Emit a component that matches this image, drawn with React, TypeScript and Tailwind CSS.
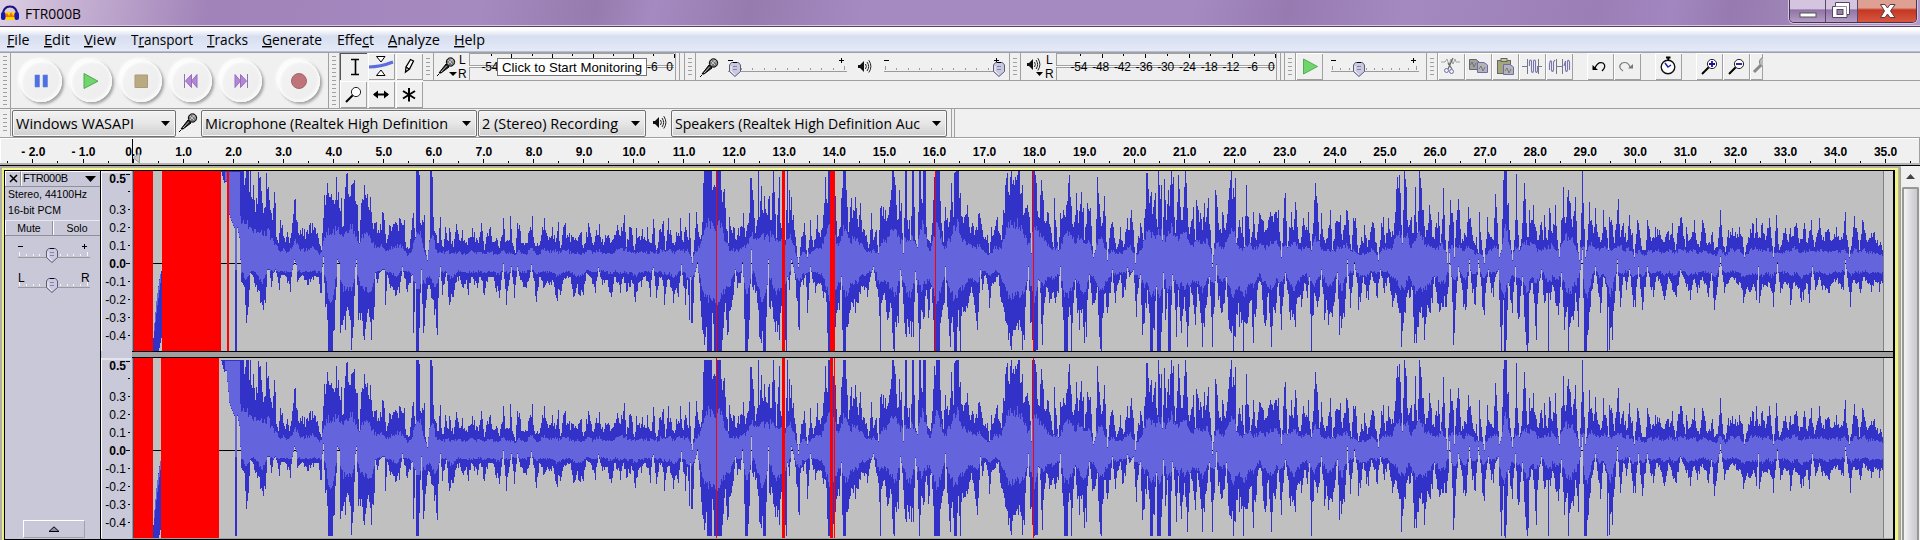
import React from "react";

const TOP =
  "133:33 221:33 243:33 244:75 246:33 248:33 249:95 250:33 251:110 253:75 255:155 258:36 260:50 262:130 264:145 266:38 268:80 270:150 272:180 274:95 275:130 276:230 278:250 280:180 282:195 284:235 287:215 289:250 292:190 294:120 295:118 297:185 298:220 302:205 306:215 312:190 315:205 318:235 321:270 322:220 324:105 327:70 330:110 333:120 336:52 338:95 341:115 342:200 345:80 347:38 349:110 351:75 354:60 357:135 359:250 361:130 364:75 366:115 370:110 372:190 376:185 379:220 382:155 384:180 386:250 389:195 392:200 396:190 399:175 402:195 404:180 405:245 409:265 411:210 413:160 415:230 416:33 418:33 419:45 420:190 422:180 424:165 425:270 427:300 429:240 430:33 431:33 432:50 433:170 435:220 438:250 440:172 441:240 443:260 445:200 447:240 449:205 453:260 456:192 459:240 462:210 465:250 469:235 472:205 476:235 478:250 481:188 484:270 487:220 490:200 492:245 496:235 499:265 503:175 505:245 509:240 510:168 512:250 515:280 517:190 519:195 522:250 526:250 528:220 532:168 534:250 537:250 541:225 542:200 544:175 545:210 548:240 552:200 555:245 558:186 560:265 563:200 565:190 567:225 571:225 574:240 578:230 581:215 583:265 586:215 588:190 591:230 594:245 596:210 599:192 601:245 605:225 608:225 610:250 614:225 617:195 619:225 621:200 624:165 626:260 629:200 631:205 634:270 636:205 640:240 642:207 645:240 647:200 649:245 651:250 653:178 656:270 659:210 663:183 665:270 668:175 670:210 673:250 676:215 678:220 680:175 682:240 685:200 688:240 689:160 691:290 692:310 694:240 696:157 699:230 702:185 703:70 704:33 711:33 713:80 715:80 716:33 720:33 721:90 722:125 724:88 725:145 728:250 729:170 731:210 734:205 736:240 738:205 740:200 743:160 745:230 748:190 750:55 751:55 753:120 755:220 757:180 758:33 759:170 761:78 762:150 764:107 766:160 769:107 771:180 773:33 774:95 776:235 779:50 780:190 782:190 784:190 785:240 787:33 788:190 789:90 790:150 791:110 793:165 795:230 798:320 800:260 801:230 804:190 807:290 810:180 813:260 817:165 820:230 822:205 824:130 825:50 827:130 828:33 830:33 835:108 837:230 840:200 841:115 843:33 845:33 846:90 848:215 851:115 853:150 855:110 858:200 860:130 861:180 864:210 866:225 868:265 870:210 871:160 873:240 876:210 878:280 880:145 883:140 885:150 888:165 890:120 892:33 893:33 895:75 897:180 899:90 901:130 903:280 905:33 906:33 907:180 909:180 910:240 912:33 913:33 915:240 917:260 919:33 920:33 922:130 923:33 925:33 926:200 928:240 930:250 932:190 934:50 936:33 939:33 941:190 943:245 945:140 948:200 950:150 951:70 953:170 954:40 956:33 958:33 960:100 963:190 967:135 969:200 972:190 975:210 979:160 982:210 985:230 987:225 989:280 991:200 994:210 997:170 999:220 1001:240 1003:150 1005:75 1007:40 1009:105 1010:50 1011:33 1013:60 1015:50 1017:45 1018:33 1019:33 1021:100 1022:75 1024:160 1027:135 1029:170 1031:280 1032:33 1034:33 1036:70 1038:170 1041:60 1043:120 1045:190 1047:155 1050:200 1053:260 1054:115 1056:200 1058:270 1060:160 1063:150 1066:135 1068:70 1069:45 1070:110 1073:200 1076:100 1078:190 1081:97 1083:145 1084:240 1087:130 1090:145 1093:290 1095:270 1097:50 1098:100 1100:170 1102:190 1104:108 1107:300 1110:205 1112:185 1115:250 1117:260 1120:200 1123:260 1127:175 1129:210 1131:150 1133:210 1135:310 1137:250 1140:190 1143:240 1146:40 1147:40 1149:130 1151:95 1153:140 1155:100 1157:200 1158:33 1159:75 1161:75 1162:240 1164:58 1166:180 1168:90 1170:75 1171:33 1173:50 1175:220 1178:45 1180:140 1182:180 1184:80 1185:33 1186:70 1188:200 1190:200 1193:140 1195:240 1196:120 1198:150 1200:160 1202:210 1204:130 1206:170 1208:115 1210:210 1212:320 1214:250 1215:90 1217:140 1219:210 1221:220 1222:155 1225:210 1228:120 1230:60 1231:33 1233:85 1235:55 1236:250 1239:180 1241:220 1242:170 1244:260 1246:75 1248:170 1250:250 1253:155 1256:240 1259:160 1262:180 1265:210 1268:180 1270:155 1273:185 1275:155 1278:150 1281:290 1284:115 1285:100 1287:260 1289:200 1291:155 1293:210 1295:125 1296:150 1299:250 1303:175 1306:200 1308:155 1311:270 1314:120 1315:70 1317:130 1319:240 1321:160 1324:240 1327:235 1330:150 1332:270 1335:190 1338:185 1340:165 1342:240 1346:150 1348:180 1351:270 1353:175 1355:175 1358:280 1361:230 1363:250 1364:195 1367:260 1371:200 1373:190 1376:250 1378:300 1381:190 1383:170 1385:250 1388:175 1391:230 1394:190 1397:50 1399:45 1400:100 1402:250 1404:33 1406:80 1408:200 1411:170 1413:220 1415:80 1417:220 1419:33 1421:85 1423:150 1425:230 1429:135 1431:180 1433:230 1436:190 1438:155 1440:250 1443:83 1445:240 1447:310 1450:120 1453:185 1454:290 1456:180 1458:118 1461:250 1464:220 1466:230 1468:140 1471:200 1474:250 1476:230 1478:280 1479:155 1482:270 1484:310 1487:170 1490:230 1493:240 1495:103 1497:190 1499:290 1501:270 1503:60 1504:33 1506:33 1508:130 1510:240 1512:300 1514:240 1516:42 1517:180 1519:270 1522:190 1524:70 1526:190 1528:230 1529:150 1531:180 1533:135 1535:200 1538:240 1541:185 1543:240 1544:165 1547:240 1549:145 1552:220 1555:135 1557:240 1559:290 1561:180 1563:80 1565:190 1568:90 1570:130 1572:200 1575:110 1577:250 1579:300 1581:160 1582:33 1583:130 1585:290 1587:240 1589:125 1591:180 1593:220 1595:145 1598:230 1601:240 1603:150 1606:210 1608:270 1609:170 1611:180 1614:250 1617:150 1618:117 1620:230 1623:190 1625:220 1627:240 1629:165 1632:220 1634:290 1637:180 1639:210 1642:270 1645:270 1647:180 1650:230 1653:230 1655:200 1659:210 1662:240 1665:230 1667:215 1670:225 1672:190 1675:270 1677:220 1680:175 1682:190 1685:260 1686:200 1689:240 1692:215 1694:180 1696:240 1699:260 1702:180 1705:220 1708:250 1712:215 1714:270 1717:260 1720:150 1722:230 1725:275 1728:210 1732:205 1735:215 1739:200 1742:230 1744:290 1748:230 1752:190 1755:220 1756:175 1759:230 1762:190 1765:240 1769:175 1773:290 1776:165 1779:270 1783:220 1785:205 1787:240 1790:205 1794:200 1796:190 1799:250 1804:190 1807:250 1811:180 1814:260 1817:220 1819:175 1822:240 1825:215 1829:215 1832:240 1836:200 1839:240 1843:220 1845:155 1847:240 1849:290 1852:230 1854:168 1857:215 1859:270 1862:180 1865:220 1868:240 1871:220 1874:215 1877:240 1880:245 1882:270";
const BOTTOM =
  "133:33 221:36 224:70 226:65 229:165 232:190 234:205 235:573 236:573 237:205 239:235 241:365 244:380 246:490 248:440 250:340 252:345 254:370 257:395 260:430 263:450 265:430 267:330 269:330 271:380 273:340 275:330 277:350 279:390 281:345 284:345 287:370 290:395 292:330 294:300 296:315 297:365 299:355 302:345 304:360 307:375 310:365 313:360 316:350 318:350 320:400 321:400 322:320 323:290 325:440 327:480 328:573 332:573 334:510 336:380 337:300 339:310 340:520 343:480 345:510 347:440 350:480 351:570 353:500 355:320 356:300 358:480 361:460 364:540 367:460 369:470 371:540 374:440 375:340 377:370 379:340 382:330 384:330 385:435 387:345 390:385 393:390 396:405 399:400 402:320 404:355 407:395 410:370 412:345 413:520 415:370 416:573 418:573 420:400 421:330 423:520 426:420 428:375 431:415 434:465 437:525 438:415 439:350 440:320 442:405 446:340 449:435 453:410 456:365 460:360 463:385 466:360 468:405 471:350 474:375 477:385 480:350 484:405 488:350 492:350 495:385 499:415 501:360 503:312 506:435 509:360 511:320 514:415 517:320 520:360 523:380 526:385 529:355 531:315 533:355 536:425 539:350 543:385 546:370 549:375 553:365 556:415 560:405 563:360 566:355 570:350 573:410 576:385 579:405 583:405 586:340 590:350 595:400 598:325 602:375 605:360 608:380 611:410 614:350 617:370 620:400 623:350 626:395 629:380 632:370 635:425 638:370 641:380 644:350 648:365 650:410 652:330 653:325 656:415 659:350 662:360 664:435 667:360 670:380 673:430 676:385 678:410 681:315 685:435 687:360 689:480 690:350 691:490 692:490 694:350 697:310 699:370 701:470 704:555 706:500 707:573 711:573 712:460 714:573 716:573 721:573 723:505 725:430 727:525 730:450 733:405 735:330 737:385 740:370 742:310 743:350 745:573 747:573 749:480 751:270 752:380 755:400 757:430 759:530 761:550 763:573 765:573 766:470 768:300 769:440 772:440 775:515 777:515 779:540 780:460 783:430 785:540 786:573 787:350 789:390 791:300 793:320 795:360 798:500 799:510 800:380 803:375 805:345 807:460 810:320 813:370 815:400 818:370 820:370 823:415 825:400 827:520 828:573 830:573 835:500 837:450 839:450 841:350 842:510 843:573 845:573 847:500 849:460 852:430 855:460 858:430 862:380 864:390 867:410 870:350 873:320 876:380 878:410 880:573 881:430 884:400 887:480 890:430 892:520 894:573 896:500 898:490 900:330 902:380 904:490 906:530 908:500 911:530 913:530 915:335 917:400 918:490 919:573 921:450 924:470 926:390 928:475 931:380 933:480 934:573 939:573 940:490 942:450 944:430 945:320 947:440 950:560 952:470 954:573 956:573 958:450 960:573 962:440 965:455 968:430 970:400 972:400 975:460 977:510 979:400 980:330 982:390 985:345 988:390 989:445 992:370 995:365 998:345 1000:410 1003:440 1006:490 1008:540 1011:570 1013:510 1015:510 1018:510 1020:500 1022:570 1024:540 1025:440 1028:320 1030:490 1032:540 1034:573 1037:570 1038:360 1040:400 1042:555 1044:430 1046:380 1049:430 1052:400 1055:430 1058:400 1060:320 1062:440 1064:573 1067:573 1069:440 1071:573 1073:430 1075:360 1077:460 1079:510 1081:460 1083:500 1084:550 1086:530 1087:420 1089:345 1092:435 1095:420 1097:380 1099:530 1101:573 1103:460 1105:400 1107:460 1110:400 1112:330 1115:430 1118:370 1120:345 1122:415 1125:390 1127:325 1129:350 1133:330 1136:470 1138:385 1140:345 1142:525 1144:490 1146:445 1147:390 1149:460 1150:573 1152:573 1154:510 1156:380 1157:573 1160:573 1162:460 1163:340 1165:480 1167:400 1168:573 1170:573 1172:345 1174:400 1176:530 1178:390 1181:520 1184:410 1187:560 1190:380 1193:435 1195:495 1197:380 1200:460 1202:560 1204:500 1207:410 1209:350 1211:470 1212:560 1214:440 1216:315 1218:420 1221:460 1224:430 1226:350 1228:480 1231:520 1233:573 1235:530 1238:430 1239:500 1241:490 1243:573 1245:490 1247:490 1249:430 1251:420 1253:550 1255:470 1258:370 1260:365 1262:420 1264:490 1266:480 1268:400 1270:500 1271:560 1273:440 1275:460 1278:370 1281:510 1283:410 1285:340 1287:390 1290:480 1292:470 1295:500 1298:410 1301:440 1304:370 1307:415 1309:350 1311:573 1314:400 1317:440 1319:410 1321:330 1324:480 1326:420 1328:495 1332:470 1335:400 1337:340 1339:525 1341:505 1344:470 1346:370 1347:300 1350:445 1352:380 1354:310 1357:370 1358:450 1361:400 1363:350 1366:415 1368:420 1371:340 1374:370 1377:415 1380:330 1384:400 1388:350 1392:440 1395:400 1397:430 1400:460 1401:560 1403:490 1405:460 1407:400 1410:410 1412:390 1414:550 1416:550 1417:500 1420:460 1422:475 1424:540 1426:470 1429:455 1432:430 1434:350 1437:430 1439:455 1443:440 1446:440 1448:380 1449:280 1451:350 1453:555 1455:450 1458:320 1461:370 1463:440 1466:440 1469:300 1472:400 1475:435 1478:300 1480:350 1482:440 1484:465 1486:370 1488:330 1491:400 1493:410 1495:350 1498:330 1500:500 1501:573 1503:420 1504:573 1506:540 1508:370 1510:420 1512:460 1515:320 1517:460 1519:470 1522:350 1524:470 1526:555 1528:550 1529:400 1532:370 1534:430 1536:540 1538:400 1541:330 1544:430 1546:400 1547:400 1548:573 1549:400 1550:420 1553:380 1555:430 1558:465 1561:340 1564:510 1567:440 1568:573 1570:490 1573:480 1575:400 1578:500 1580:330 1582:270 1584:573 1586:573 1588:510 1590:440 1593:370 1595:320 1598:400 1600:460 1603:350 1606:380 1607:573 1608:440 1609:570 1611:500 1612:540 1614:430 1617:300 1620:440 1623:350 1626:390 1629:330 1633:440 1635:440 1638:320 1642:450 1645:380 1647:320 1650:380 1653:410 1656:350 1660:370 1664:420 1668:350 1672:390 1676:410 1680:330 1685:370 1690:420 1693:360 1697:400 1701:360 1705:370 1708:410 1711:340 1714:450 1717:380 1720:290 1724:400 1728:370 1732:350 1736:370 1740:370 1743:430 1747:380 1750:395 1754:380 1756:420 1758:320 1759:430 1763:380 1767:380 1769:370 1773:440 1777:310 1780:400 1784:365 1788:370 1790:435 1793:370 1797:380 1800:415 1803:420 1806:370 1809:430 1812:320 1815:390 1819:350 1822:390 1826:385 1829:400 1832:370 1836:360 1839:370 1843:390 1845:300 1848:380 1850:440 1853:360 1857:370 1860:400 1863:350 1867:370 1871:395 1874:360 1877:370 1879:395 1882:370";

const START = 133;
const END = 1883;

function expand(src: string): { v: number[]; key: boolean[] } {
  const pts = src.split(" ").map((p) => p.split(":").map(Number));
  const v: number[] = [];
  const key: boolean[] = [];
  let i = 0;
  for (let x = START; x < END; x++) {
    while (i < pts.length - 2 && pts[i + 1][0] <= x) i++;
    const [x0, a] = pts[i];
    const [x1, b] = pts[i + 1];
    const t = Math.min(1, (x - x0) / (x1 - x0));
    v.push((310 - (a + (b - a) * t)) / 3);
    key.push(x === x0 || x === x1);
  }
  return { v, key };
}

const noise = (n: number) => {
  const s = Math.sin(n * 127.1 + 11.7) * 43758.5453;
  return s - Math.floor(s);
};

const upper = expand(TOP);
const lower = expand(BOTTOM);

function smooth(v: number[], i: number) {
  let s = 0;
  let n = 0;
  for (let k = -3; k <= 3; k++) {
    const w = v[i + k];
    if (w !== undefined) {
      s += w;
      n++;
    }
  }
  return s / n;
}

function wavePaths(gain: number, zero: number) {
  let outer = "";
  let inner = "";
  for (let x = 221; x < END; x++) {
    const i = x - START;
    let u = upper.v[i];
    let d = -lower.v[i];
    if (x > 250) {
      if (!upper.key[i] && u > 14 && u < 90) u = Math.max(13, u * (0.74 + 0.34 * noise(x)));
      if (!lower.key[i] && d > 14 && d < 85) d = Math.max(13, d * (0.76 + 0.34 * noise(x + 5000)));
    }
    const top = Math.max(0, Math.round(zero - u * gain));
    const bot = Math.min(180, Math.round(zero + d * gain));
    outer += `M${x - START + 0.5} ${top}V${Math.max(bot, top + 1)}`;
    if (x > 224) {
      const quiet = 6.5 + 3 * noise(x + 900);
      const us = smooth(upper.v, i);
      const ds = -smooth(lower.v, i);
      const su = x < 240 ? us : Math.max(quiet, (7 + (us - 20) * 0.48) * (0.85 + 0.3 * noise(x + 77)));
      const sd = Math.max(quiet, (8 + (ds - 20) * 0.45) * (0.85 + 0.3 * noise(x + 177)));
      const it = Math.max(top + 1, Math.round(zero - su * gain));
      const ib = Math.min(bot - 1, Math.round(zero + sd * gain));
      if (ib > it) inner += `M${x - START + 0.5} ${it}V${ib}`;
    }
  }
  return { outer, inner };
}

const wave1 = wavePaths(1, 92.3);
const wave2 = wavePaths(0.975, 92.3);

function Lane({ wave, clips }: { wave: { outer: string; inner: string }; clips: number[][] }) {
  return (
    <svg width="1760" height="180" viewBox="0 0 1760 180" className="block shrink-0" shapeRendering="crispEdges">
      <rect width="1750" height="180" fill="#c0c0c0" />
      <rect x="1750" width="1" height="180" fill="#808080" />
      <rect x="1751" width="9" height="180" fill="#d5d5d5" />
      <rect y="92" width="1750" height="1" fill="#000" />
      <path d="M20 180V172L23 140L26 110L29 98V165L26 180Z" fill="#3232c8" />
      <path d="M21 158L24 125L28 100V108L24 138L21 165Z" fill="#6464dc" />
      <path d={wave.outer} stroke="#3232c8" />
      <path d={wave.inner} stroke="#6464dc" />
      {clips.map(([x, w]) => (
        <rect key={x} x={x - START} width={w} height="180" fill="#f00" />
      ))}
    </svg>
  );
}

function Grip({ tall }: { tall?: boolean }) {
  return (
    <div className={`flex w-[11px] shrink-0 flex-col items-center justify-center gap-[3px] border-r border-[#a0a0a0] ${tall ? "h-full" : "h-[27px]"}`}>
      {Array.from({ length: tall ? 13 : 5 }, (_, i) => (
        <div key={i} className="h-px w-1 bg-[#a0a0a0]" />
      ))}
    </div>
  );
}

function Art({ x, w, y = 53, h = 27, children }: { x: number; w: number; y?: number; h?: number; children?: React.ReactNode }) {
  return (
    <svg width={w} height={h} viewBox={`${x} ${y} ${w} ${h}`} className="block shrink-0">
      {children}
    </svg>
  );
}

function Thumb({ x, y }: { x: number; y: number }) {
  return (
    <g transform={`translate(${x} ${y})`}>
      <path d="M-3.5-6.5H3.5L5.5-4V2.5L0 7.5L-5.5 2.5V-4Z" fill="#c9c9e4" stroke="#5e5e70" />
      <path d="M-2-6.5H2" stroke="#000" />
      <path d="M-4-3V2L0 6" stroke="#f2f2fc" fill="none" />
      <path d="M-2-2.5H2M-2 .5H2" stroke="#85859c" />
    </g>
  );
}

function Slider({ x0, x1, y, thumb, n = 10, left = "-", right = "+", tick = "#9a9a9a" }: { x0: number; x1: number; y: number; thumb: number; n?: number; left?: string; right?: string; tick?: string }) {
  const ticks = Array.from({ length: n + 1 }, (_, i) => Math.round(x0 + 1 + ((x1 - x0 - 4) * i) / n));
  return (
    <g>
      <path d={`M${x0} ${y + 0.5}H${x1}`} stroke="#9a9a9a" />
      {ticks.map((t, i) => (
        <path key={i} d={`M${t + 0.5} ${y - (i % n ? 3 : 5)}V${y - 1}`} stroke={tick} />
      ))}
      {left === "-" ? (
        <path d={`M${x0} ${y - 10.5}h5M${x1 - 8} ${y - 10.5}h5M${x1 - 5.5} ${y - 13}v5`} stroke="#000" />
      ) : (
        <g fontFamily="Liberation Sans" fontSize="12">
          <text x={x0} y={y - 5}>{left}</text>
          <text x={x1 - 9} y={y - 5}>{right}</text>
        </g>
      )}
      <Thumb x={thumb} y={y - 2} />
    </g>
  );
}

const Mic = ({ x, y }: { x: number; y: number }) => (
  <g transform={`translate(${x} ${y})`}>
    <path d="M0 19L2 17" stroke="#000" />
    <path d="M2 16L9 7L12 10L4 16Z" fill="#222" stroke="#000" />
    <path d="M4 15L10 8.5" stroke="#bbb" />
    <circle cx="13.5" cy="5" r="4.2" fill="#777" stroke="#000" />
    <path d="M11 3L15 7M13 1.5L17 5.5M15.5 2L11 7" stroke="#ddd" strokeWidth=".8" />
  </g>
);

const Speaker = ({ x, y }: { x: number; y: number }) => (
  <g transform={`translate(${x} ${y})`}>
    <path d="M0 4H2L6 0V11L2 7H0Z" fill="#111" />
    <path d="M7.5 3Q9.2 5.5 7.5 8M9 1Q12.3 5.5 9 10M10.8-.8Q15 5.5 10.8 11.5" stroke="#222" fill="none" />
  </g>
);

function ChannelLetters({ x }: { x: number }) {
  return (
    <g fontSize="12" fontFamily="Liberation Sans">
      <text x={x} y="64">L</text>
      <text x={x - 1} y="78">R</text>
    </g>
  );
}

function Meter({ x, w, labels, step, first }: { x: number; w: number; labels: string[]; step: number; first: number }) {
  return (
    <Art x={x} w={w}>
      <path d={`M${x} 53.5H${x + w - 6}M${x + 0.5} 53V65M${x + 0.5} 68V80M${x} 65.5H${x + w - 6}M${x} 67.5H${x + w - 6}`} stroke="#a0a0a0" />
      <path d={`M${x} 66.5H${x + w - 6}`} stroke="#fff" />
      <path d={`M${x + w - 4.5} 53V80M${x + w - 0.5} 53V80`} stroke="#a0a0a0" />
      {labels.map((_, i) => (
        <path key={i} d={`M${Math.round(first + i * step) + 0.5} 54v${i % 2 ? 4 : 2}`} stroke="#000" />
      ))}
      <g fontFamily="Liberation Sans" fontSize="12" textAnchor="middle">
        {labels.map((l, i) => l && (
          <text key={i} x={first + i * step - (l === "0" ? 4 : 1)} y="70.500" textLength={l.length === 3 ? 17 : undefined}>{l}</text>
        ))}
      </g>
    </Art>
  );
}

function ToolBtn({ x, y = 53, down, w = 27, children }: { x: number; y?: number; down?: boolean; w?: number; children?: React.ReactNode }) {
  return (
    <div className={`h-[27px] shrink-0 overflow-hidden ${down ? "border-l border-t border-[#555]" : "border-l border-t border-white shadow-[inset_-1px_-1px_0_#a0a0a0]"}`} style={{ width: w }}>
      <Art x={x + 1} w={w - 1} y={y + 1} h={26}>{children}</Art>
    </div>
  );
}

const Magnifier = ({ x, y, sign, gray }: { x: number; y: number; sign?: string; gray?: boolean }) => (
  <g transform={`translate(${x} ${y})`}>
    <path d="M0 15L7 8" stroke={gray ? "#888" : "#000"} strokeWidth={gray ? 3 : 2} />
    <circle cx="10" cy="5" r="4.6" fill={gray ? "#bbb" : "#fff"} stroke={gray ? "#888" : "#222"} />
    {sign && <path d={sign === "+" ? "M7 5H13M10 2V8" : "M7 5H13"} stroke="#1414a0" strokeWidth="1.8" />}
  </g>
);

const glyphs: Record<string, React.ReactNode> = {
  pause: <path d="M-6-6h4.5V6H-6ZM2-6H6.5V6H2Z" fill="#4a70ec" stroke="#6d82c8" strokeWidth=".6" />,
  play: <path d="M-7-7.5L7 .2L-7 7.5Z" fill="#70d56c" stroke="#50a850" />,
  stop: <path d="M-6-6H6.5V6.5H-6Z" fill="#baaa82" stroke="#aa9b78" />,
  prev: <path d="M-6.5-7V7M6-6.5V6.5L.5 0ZM.5-6.5V6.5L-5.5 0Z" fill="#b485dc" stroke="#9370b6" />,
  next: <path d="M6.5-7V7M-6-6.5V6.5L-.5 0ZM-.5-6.5V6.5L5.5 0Z" fill="#b485dc" stroke="#9370b6" />,
  record: <circle r="7.5" fill="#be7478" stroke="#a2676a" />,
};

function RoundButton({ kind }: { kind: string }) {
  return (
    <div className="flex size-[42px] items-center justify-center rounded-full bg-linear-to-br from-[#f4f4f4] to-[#ececec] shadow-[2px_2px_3px_#a0a0a0,-2px_-2px_3px_#fff,inset_2px_2px_3px_#fff,inset_-2px_-2px_3px_#fafafa]">
      <svg width="20" height="20" viewBox="-10 -10 20 20">{glyphs[kind]}</svg>
    </div>
  );
}

function Combo({ w, text, tw }: { w: number; text: string; tw: number }) {
  return (
    <div className="mt-px flex h-[27px] shrink-0 items-center justify-between rounded-[2px] border border-[#707070] bg-linear-to-b from-[#f2f2f2] via-[#e6e6e6] to-[#cfcfcf] pl-[3px] pr-[5px] shadow-[inset_0_0_0_1px_#f8f8f8]" style={{ width: w }}>
      <div className="overflow-hidden" style={{ width: w - 31 }}>
        <svg width={tw} height="24" className="block overflow-visible">
          <text x="0" y="16.5" textLength={tw} lengthAdjust="spacingAndGlyphs" fontFamily="Open Sans, Noto Sans" fontSize="14.5">{text}</text>
        </svg>
      </div>
      <svg width="9" height="5" viewBox="0 0 9 5"><path d="M0 0H9L4.5 5Z" /></svg>
    </div>
  );
}

const menus: [string, string, string, number, number][] = [
  ["", "F", "ile", 37, 22.5], ["", "E", "dit", 40, 26], ["", "V", "iew", 47, 32], ["T", "r", "ansport", 76, 62], ["", "T", "racks", 55, 41],
  ["", "G", "enerate", 75, 60], ["Effe", "c", "t", 51, 37], ["", "A", "nalyze", 66, 52], ["", "H", "elp", 40, 31],
];

const seconds = Array.from({ length: 38 }, (_, i) => i - 2);

function TimeRuler() {
  return (
    <svg width="1920" height="27" viewBox="0 138 1920 27" className="block shrink-0 bg-[#f0f0f0]">
      <path d="M0 138.5H1920M.5 138V163" stroke="#fff" />
      <path d="M0 164H1920" stroke="#a0a0a0" strokeWidth="1.5" />
      <path d="M1919.5 138V163" stroke="#a0a0a0" />
      {seconds.map((n) => (
        <g key={n}>
          <path shapeRendering="crispEdges" d={`M${Math.round(132.6 + n * 50.08) + 0.5} 159v4M${Math.round(132.6 + (n - 0.5) * 50.08) + 0.5} 161v2`} stroke="#000" />
          <text x={133.5 + n * 50.06} y="156" textAnchor="middle" fontFamily="Liberation Sans" fontWeight="700" fontSize="12">
            {n < 0 ? `- ${-n}.0` : `${n}.0`}
          </text>
        </g>
      ))}
      <path d="M1910.5 161v2" stroke="#000" />
      <path d="M132.5 139V163" stroke="#000" />
      <path d="M139.5 153V163L133.5 158Z" fill="#c8c8c8" stroke="#999" />
    </svg>
  );
}

function AmpRuler() {
  const marks = ["0.5", "", "0.3", "0.2", "0.1", "0.0", "-0.1", "-0.2", "-0.3", "-0.4"];
  return (
    <svg width="31" height="180" viewBox="0 0 31 180" className="block bg-[#c9c9da]">
      <path d="M0 1H30M.5 0V180" stroke="#fff" />
      {marks.map((m, i) => {
        const strong = i === 0 || i === 5;
        const y = Math.round(92.5 - (5 - i) * 18) - 0.5;
        return (
          <g key={i}>
            <path shapeRendering="crispEdges" d={`M${strong ? 25 : 27} ${i ? y : 3.5}H29`} stroke="#000" />
            <text x="25" y={i ? y + 4 : 12} textAnchor="end" fontFamily="Liberation Sans" fontWeight={strong ? 700 : 400} fontSize="12">{m}</text>
          </g>
        );
      })}
    </svg>
  );
}

function TrackPanel() {
  return (
    <div className="flex h-[368px] w-[96px] shrink-0 flex-col border-r border-black bg-[#c8c8d8] font-['Liberation_Sans'] text-[11px] leading-none">
      <div className="flex h-[16px] shrink-0 border-b border-[#909098]">
        <div className="w-4 border-l border-t border-r border-white border-r-[#909098]">
          <svg width="14" height="14" viewBox="0 0 14 14"><path d="M4 3L11 10M11 3L4 10" stroke="#000" strokeWidth="1.5" /></svg>
        </div>
        <div className="flex flex-1 items-center justify-between border-l border-t border-white pl-px pr-1">
          <svg width="48" height="13"><text y="9" textLength="45" fontSize="11" fontFamily="Liberation Sans">FTR000B</text></svg>
          <svg width="11" height="6"><path d="M0 0H11L5.5 6Z" /></svg>
        </div>
      </div>
      <svg width="95" height="33" className="shrink-0"><g fontFamily="Liberation Sans" fontSize="10.5"><text x="3" y="11" textLength="79">Stereo, 44100Hz</text><text x="3" y="27" textLength="53">16-bit PCM</text></g></svg>
      <div className="flex h-[16px] shrink-0 border-b border-t border-b-[#909098] border-t-[#e8e8f0]">
        <div className="flex w-[48px] items-center justify-center border-l border-r border-white border-r-[#909098] text-[10.5px]">Mute</div>
        <div className="flex flex-1 items-center justify-center border-l border-white text-[10.5px]">Solo</div>
      </div>
      <Art x={5} w={95} y={236} h={70}>
        <Slider x0={18} x1={90} y={257} thumb={52} tick="#f6f6ff" />
        <Slider x0={18} x1={90} y={287} thumb={52} left="L" right="R" tick="#f6f6ff" />
      </Art>
      <div className="mt-auto ml-[18px] mb-px flex h-[18px] w-[62px] shrink-0 items-center justify-center border border-white border-b-[#a0a0a8] border-r-[#a0a0a8]">
        <svg width="12" height="6" viewBox="0 0 12 6"><path d="M1 5.5L6 .8L11 5.5Z" fill="#8a8aa8" stroke="#000" /></svg>
      </div>
    </div>
  );
}

export default function App() {
  return (
    <div className="flex h-[540px] w-[1920px] flex-col overflow-hidden bg-[#f0f0f0] font-['Open_Sans','Noto_Sans',sans-serif] text-black">
      <header className="flex h-[27px] shrink-0 justify-between border-b border-[#554060] bg-[linear-gradient(100deg,#dccfe4_0%,#c5b0d2_4%,#a182b9_11%,#a58ac0_25%,#967bae_31%,#a48ac0_34%,#967bae_39%,#a58ac2_45%,#a58ac2_62%,#967ab0_67%,#a489c1_73%,#9c7eb6_83%,#a286bf_87%,#967ab0_90%,#b39ac6_100%)] shadow-[inset_0_-1px_0_#d8c8e4]">
        <div className="flex items-start">
          <svg width="25" height="26" viewBox="0 0 25 26">
            <path d="M4 14Q6 10 11 13Q16 10 17 15L15 20H6Z" fill="#ffd800" />
            <path d="M5 16L7 13L9 16L11 12L13 16L15 13L16 17H5Z" fill="#f26c10" />
            <path d="M3 15Q3 6.5 10 6.5T17 15" fill="none" stroke="#15157c" strokeWidth="2" />
            <rect x="1" y="12" width="4.5" height="8" rx="2" fill="#1818b0" />
            <rect x="14.5" y="12" width="4.5" height="8" rx="2" fill="#1818b0" />
          </svg>
          <svg width="80" height="26"><text x="0" y="18.5" textLength="56" lengthAdjust="spacingAndGlyphs" fontSize="14.5" fontFamily="Open Sans">FTR000B</text></svg>
        </div>
        <div className="mr-[3px] flex h-[23px] overflow-hidden rounded-b-[5px] border border-t-0 border-[#443650] shadow-[0_0_0_1px_#d5c5df]">
          <div className="flex w-[35px] bg-linear-to-b from-[#d4c4e0] from-40% via-[#9074a4] via-45% to-[#b59bc7]"><svg width="35" height="22"><rect x="10" y="13" width="16" height="4" fill="#fff" stroke="#555" /></svg></div>
          <div className="flex w-[33px] border-x border-[#5a4668] bg-linear-to-b from-[#d4c4e0] from-40% via-[#9074a4] via-45% to-[#b59bc7]"><svg width="31" height="22"><path d="M9.500 2.500H23.500V14.500H21V17.500H6.500V6.500H9.500Z" fill="#fff" stroke="#55465f" /><path d="M9.500 6.500H20.500V14.500" fill="none" stroke="#665870" strokeWidth=".7" /><rect x="11" y="9.500" width="6" height="5" fill="#9a80ac" stroke="#55465f" /></svg></div>
          <div className="flex w-[58px] bg-linear-to-b from-[#dda092] from-35% via-[#c43722] via-45% to-[#d8563f]"><svg width="58" height="22"><path d="M22.500 4.500H27L29.500 8L32 4.500H37L32.500 11L37 17.500H32L29.500 14L27 17.500H22.500L26.500 11Z" fill="#fff" stroke="#5c3a40" /></svg></div>
        </div>
      </header>

      <nav className="flex h-[25px] shrink-0 items-start border-b border-[#b9bdd4] bg-linear-to-b from-white from-10% via-[#d7deef] via-40% to-[#e4eaf7] pl-[7px]">
        {menus.map(([a, u, b, w, tw]) => (
          <div key={u + b} className="shrink-0" style={{ width: w }}>
            <svg width={w} height="24" className="block">
              <text y="18" textLength={tw} lengthAdjust="spacingAndGlyphs" fontFamily="Open Sans, Noto Sans" fontSize="14.5">
                {a}<tspan textDecoration="underline">{u}</tspan>{b}
              </text>
            </svg>
          </div>
        ))}
      </nav>

      <div className="flex h-[57px] shrink-0 border-b border-t border-[#a0a0a0]">
        <Grip tall />
        <div className="flex w-[318px] items-center border-r border-[#a0a0a0] pl-[9px]">
          <div className="flex gap-2">
            {["pause", "play", "stop", "prev", "next"].map((k) => <RoundButton key={k} kind={k} />)}
          </div>
          <div className="ml-4"><RoundButton kind="record" /></div>
        </div>
        <Grip tall />
        <div className="grid h-[55px] w-[83px] shrink-0 grid-cols-[28px_28px_27px] grid-rows-[28px_27px]">
          <ToolBtn x={340} down><path d="M351 59.500H359M355.500 60V74M351 74.500H359" stroke="#000" strokeWidth="1.6" /></ToolBtn>
          <ToolBtn x={368}>
            <path d="M369 67Q380 67 393 62" stroke="#5b6be0" strokeWidth="3" fill="none" />
            <path d="M376.500 56.500H385L381 62ZM376.500 75.500H385L381 70Z" fill="#fff" stroke="#000" />
          </ToolBtn>
          <ToolBtn x={396}><path d="M405.500 72L406 67L410.500 59.500L413.500 61L409.500 69ZM406 67L409 69" fill="#fff" stroke="#000" strokeWidth="1.300" /></ToolBtn>
          <ToolBtn x={340} y={81}><Magnifier x={346} y={87} /></ToolBtn>
          <ToolBtn x={368} y={81}><path d="M374 94.500H388" stroke="#000" strokeWidth="2" /><path d="M373 94.500L378 90.500V98.500ZM389 94.500L384 90.500V98.500Z" /></ToolBtn>
          <ToolBtn x={396} y={81}><path d="M409 88V101.500M403 91L415 98.500M415 91L403 98.500" stroke="#000" strokeWidth="2" /></ToolBtn>
        </div>
        <div className="flex h-[28px] flex-1 border-b border-[#a0a0a0]">
          <Grip />
          <Art x={434} w={35}>
            <Mic x={437} y={57} /><path d="M449 72H457L453 76Z" />
            <ChannelLetters x={459} />
          </Art>
          <div className="relative w-[211px] shrink-0">
            <Meter x={469} w={211} labels={["-54", "", "", "", "", "", "", "", "-6", "0"]} step={20.3} first={491} />
            <div className="absolute left-[28px] top-[5px] flex h-[18px] w-[150px] items-center justify-center border border-[#777] bg-white">
              <svg width="142" height="16"><text x="1" y="13" textLength="140" fontSize="13.500" lengthAdjust="spacingAndGlyphs" fontFamily="Liberation Sans">Click to Start Monitoring</text></svg>
            </div>
          </div>
          <div className="w-[5px] shrink-0 border-r border-[#a0a0a0]" />
          <Grip />
          <Art x={696} w={313}>
            <Mic x={700} y={58} /><Slider x0={728} x1={847} y={71} thumb={735} />
            <Speaker x={858} y={61} /><Slider x0={884} x1={1002} y={71} thumb={999} />
          </Art>
          <div className="border-l border-[#a0a0a0]"><Grip /></div>
          <Art x={1020} w={35}>
            <Speaker x={1026} y={59} /><path d="M1035 72H1042L1038.500 76Z" />
            <ChannelLetters x={1045} />
          </Art>
          <Meter x={1055} w={225} labels={["-54", "-48", "-42", "-36", "-30", "-24", "-18", "-12", "-6", "0"]} step={21.7} first={1079} />
          <div className="w-[4px] shrink-0 border-r border-[#a0a0a0]" />
          <Grip />
          <ToolBtn x={1296}><path d="M1303.500 59L1317.500 66.500L1303.500 74Z" fill="#70d56c" stroke="#50b050" /></ToolBtn>
          <Art x={1323} w={103}><Slider x0={1331} x1={1419} y={71} thumb={1359} /></Art>
          <div className="border-l border-[#a0a0a0]"><Grip /></div>
          <ToolBtn x={1438}>
            <path d="M1441 62H1445L1447 59L1449 65L1451 59L1453 64L1455 59L1456 62H1460" fill="none" stroke="#999" strokeWidth=".9" />
            <path d="M1453 58L1448 69M1448 63L1452 69" stroke="#666" strokeWidth="1.200" />
            <circle cx="1446.500" cy="70.500" r="2" fill="none" stroke="#7070a8" /><circle cx="1451.500" cy="71.500" r="2" fill="none" stroke="#7070a8" />
          </ToolBtn>
          <ToolBtn x={1465}>
            <path d="M1469.500 59.500H1476L1479 62V69.500H1469.500Z" fill="#a0a0a0" stroke="#666" /><path d="M1477.500 62.500H1484L1487.500 65V72.500H1477.500Z" fill="#b4b4b8" stroke="#6c6cab" />
            <path d="M1470 65L1472 62L1474 67L1476 63M1479 69L1481 66L1483 71L1485 67" fill="none" stroke="#666" strokeWidth=".8" />
          </ToolBtn>
          <ToolBtn x={1492}>
            <rect x="1497.500" y="60.500" width="13" height="13" fill="#a6a67c" stroke="#666" /><rect x="1501" y="58.500" width="6" height="3" fill="#c7c795" stroke="#666" />
            <path d="M1503.500 64.500H1510L1513.500 67V74.500H1503.500Z" fill="#b4b4b8" stroke="#6c6cab" /><path d="M1505 71L1507 68L1509 73L1511 69" fill="none" stroke="#666" strokeWidth=".8" />
          </ToolBtn>
          <ToolBtn x={1519}>
            <path d="M1522 66.500H1527M1538 66.500H1542M1529.500 66V61Q1530.500 59 1531.500 61V71Q1532.500 74 1533.500 71V61Q1534.500 59 1535.500 61V71Q1536.500 74 1537.500 71V66" fill="none" stroke="#7676ae" strokeWidth="1.100" />
            <path d="M1527.500 59V74M1538.500 59V74" stroke="#777" />
          </ToolBtn>
          <ToolBtn x={1546}>
            <path d="M1549.500 70V64Q1550.500 59 1551.500 62V70Q1552.500 73 1553.500 70V62L1555 60M1557 66.500H1562M1564 66L1565.500 61V70Q1566.500 73 1567.500 70V61Q1568.500 59 1569.500 62V70" fill="none" stroke="#7676ae" strokeWidth="1.100" />
            <path d="M1556.500 59V74M1562.500 59V74" stroke="#777" />
          </ToolBtn>
          <div className="w-[14px] shrink-0" />
          <ToolBtn x={1587}><path d="M1595 68Q1598 61 1603 63Q1607 66 1602 71" fill="none" stroke="#000" strokeWidth="1.300" /><path d="M1592.500 65V70H1598Z" /></ToolBtn>
          <ToolBtn x={1614}><path d="M1623 71Q1617 67 1622 63Q1628 61 1630 67" fill="none" stroke="#777" strokeWidth="1.200" /><path d="M1633 64V68.500H1628Z" fill="#777" /></ToolBtn>
          <div className="w-[14px] shrink-0" />
          <ToolBtn x={1655}><circle cx="1668" cy="67" r="6.800" fill="#fff" stroke="#111" strokeWidth="1.400" /><path d="M1666 57.500H1670.500M1668.300 58V61" stroke="#000" strokeWidth="1.800" /><path d="M1665 63L1668 67L1671 65" fill="none" stroke="#2020b0" strokeWidth="1.500" /></ToolBtn>
          <div className="w-[14px] shrink-0" />
          <ToolBtn x={1696}><Magnifier x={1702} y={59} sign="+" /></ToolBtn>
          <ToolBtn x={1723}><Magnifier x={1729} y={59} sign="-" /></ToolBtn>
          <ToolBtn x={1750} w={13}><Magnifier x={1754} y={57} gray /></ToolBtn>
        </div>
      </div>

      <div className="flex h-[29px] shrink-0 border-b border-[#a0a0a0]">
        <div className="mr-px h-[28px]"><Grip /></div>
        <Combo w={164} text="Windows WASAPI" tw={118} />
        <Art x={176} w={25} y={109} h={28}><Mic x={179} y={113} /></Art>
        <Combo w={276} text="Microphone (Realtek High Definition" tw={243} />
        <div className="w-px" />
        <Combo w={168} text="2 (Stereo) Recording" tw={136} />
        <Art x={646} w={25} y={109} h={28}><Speaker x={653} y={117} /></Art>
        <Combo w={276} text="Speakers (Realtek High Definition Auc" tw={245} />
        <div className="ml-1 w-1 border-x border-[#a0a0a0]" />
      </div>

      <TimeRuler />

      <div className="flex h-[375px] shrink-0 border-t border-black bg-[#a8a8a8]">
        <div className="flex w-[1901px] shrink-0 border-l-2 border-t-2 border-[#b0b0a8] shadow-[inset_0_2px_0_#f6f68c]">
          <div className="mt-0.5 w-[2px] shrink-0 bg-[#eeee84]" />
          <div className="mt-0.5 flex h-[371px] shrink-0 border-b-2 border-l border-r-2 border-t border-black">
            <TrackPanel />
            <div className="flex w-[31px] shrink-0 flex-col gap-[7px] bg-[#c8c8d8]">
              <AmpRuler />
              <AmpRuler />
            </div>
            <div className="flex w-[1761px] shrink-0 flex-col bg-[#a0a0a0]">
              <div className="flex h-[181px] border-b border-black"><div className="h-[180px] w-px shrink-0 bg-cyan-400" /><Lane wave={wave1} clips={[[133, 20], [162, 59], [227, 2], [716, 1], [782, 3], [830, 5], [935, 1], [1033, 1]]} /></div>
              <div className="h-[5px]" />
              <div className="flex h-[181px] border-t border-black"><div className="h-[180px] w-px shrink-0 bg-cyan-400" /><Lane wave={wave2} clips={[[133, 20], [161, 58], [716, 1], [782, 3], [830, 3], [834, 1], [1033, 1]]} /></div>
            </div>
          </div>
          <div className="mt-0.5 w-[3px] shrink-0 bg-[#f2f28c]" />
          <div className="w-[3px] bg-linear-to-r from-[#c4c488] to-[#999]" />
        </div>
        <div className="flex flex-1 flex-col bg-[#f0f0f0]">
          <div className="flex h-[21px] items-center justify-center"><svg width="9" height="5"><path d="M0 5L4.500 0L9 5Z" fill="#444" /></svg></div>
          <div className="mx-px flex-1 rounded-t-[2px] border-2 border-b-0 border-[#989898] bg-linear-to-r from-[#f4f4f4] via-[#dcdcdf] to-[#c8c8ce]" />
        </div>
      </div>
    </div>
  );
}
